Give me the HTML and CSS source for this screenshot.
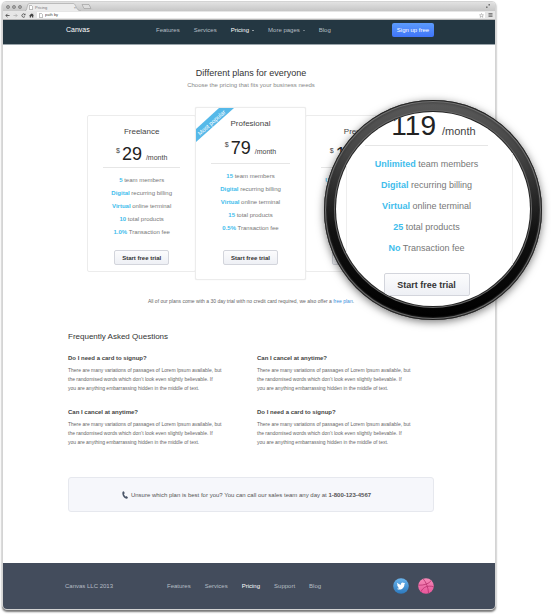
FILE: index.html
```html
<!DOCTYPE html>
<html lang="en">
<head>
<meta charset="utf-8">
<title>Canvas – Pricing</title>
<link rel="stylesheet" href="styles.css">
</head>
<body>
<div class="stage">
  <div class="window">
    <div class="tabstrip">
      <span class="lights"><i></i><i></i><i></i></span>
      <div class="tab">
        <svg class="tab-shape" viewBox="0 0 66 8" preserveAspectRatio="none" aria-hidden="true"><path d="M0 8C3 8 2 .5 5 .5H57C60 .5 60 8 66 8" fill="#ececec" stroke="#999" stroke-width=".6"/></svg>
        <svg class="doc" viewBox="0 0 4 5" aria-hidden="true"><path d="M.4.4h2l1.2 1.2v3H.4z" fill="#fff" stroke="#777" stroke-width=".5"/></svg>
        <span class="tab-title">Pricing</span>
        <span class="tab-close">×</span>
      </div>
      <svg class="newtab" viewBox="0 0 11 5" aria-hidden="true"><path d="M1 .5h7l2 4H3z" fill="#ddd" stroke="#999" stroke-width=".6"/></svg>
      <svg class="expand" viewBox="0 0 5 5" aria-hidden="true"><path d="M2.7 0H5v2.300zM0 2.700V5h2.300zM1 4l3-3" fill="#777" stroke="#777" stroke-width=".4"/></svg>
    </div>
    <div class="toolbar">
      <svg class="tool" viewBox="0 0 6 6" aria-hidden="true"><path d="M5.500 3H1M3 1 1 3l2 2" fill="none" stroke="#555" stroke-width="1.100"/></svg>
      <svg class="tool" viewBox="0 0 6 6" aria-hidden="true"><path d="M.5 3H5M3 1l2 2-2 2" fill="none" stroke="#b5b5b5" stroke-width="1"/></svg>
      <svg class="tool" viewBox="0 0 6 6" aria-hidden="true"><path d="M4.700 4.300A2 2 0 1 1 4.600 1.700" fill="none" stroke="#444" stroke-width="1"/><path d="M5.300.5v2.200H3.100z" fill="#444"/></svg>
      <svg class="tool" viewBox="0 0 6 6" aria-hidden="true"><path d="M3 .5 0 3.300h.9V5.500h1.500V3.900h1.200v1.600h1.500V3.300H6L5 2.400V.8h-.8v.8z" fill="#444"/></svg>
      <label class="address">
        <svg class="doc" viewBox="0 0 4 5" aria-hidden="true"><path d="M.4.4h2l1.200 1.200v3H.4z" fill="#fff" stroke="#777" stroke-width=".5"/></svg>
        <input type="text" value="path by" aria-label="Address">
        <svg class="star" viewBox="0 0 6 6" aria-hidden="true"><path d="m3 .6.7 1.600 1.700.1-1.300 1.100.5 1.800L3 4.300l-1.600.9.5-1.800L.6 2.300l1.700-.1z" fill="#fff" stroke="#777" stroke-width=".5"/></svg>
      </label>
      <svg class="menu" viewBox="0 0 5 5" aria-hidden="true"><path d="M0 .8h5M0 2.500h5M0 4.200h5" stroke="#555" stroke-width="1"/></svg>
    </div>

    <header class="topbar inset">
      <a class="brand" href="#">Canvas</a>
      <nav class="links">
        <a href="#">Features</a>
        <a href="#">Services</a>
        <a class="current drop" href="#">Pricing</a>
        <a class="drop" href="#">More pages</a>
        <a href="#">Blog</a>
      </nav>
      <button class="signup" type="button">Sign up free</button>
    </header>

    <main class="inset">
      <h1>Different plans for everyone</h1>
      <p class="lead">Choose the pricing that fits your business needs</p>

      <section class="plans">
        <article class="plan">
          <h2>Freelance</h2>
          <p class="price"><sup>$</sup><b>29</b><span>/month</span></p>
          <ul>
            <li><b>5</b> team members</li>
            <li><b>Digital</b> recurring billing</li>
            <li><b>Virtual</b> online terminal</li>
            <li><b>10</b> total products</li>
            <li><b>1.0%</b> Transaction fee</li>
          </ul>
          <button class="trial" type="button">Start free trial</button>
        </article>
        <article class="plan featured">
          <svg class="ribbon" viewBox="0 0 38 35" aria-hidden="true"><path d="M23 0h15L0 34V21z" fill="#56b9e9"/><text x="15" y="14" transform="rotate(-42 15 14)" dy="3" text-anchor="middle">Most popular</text></svg>
          <h2>Profesional</h2>
          <p class="price"><sup>$</sup><b>79</b><span>/month</span></p>
          <ul>
            <li><b>15</b> team members</li>
            <li><b>Digital</b> recurring billing</li>
            <li><b>Virtual</b> online terminal</li>
            <li><b>15</b> total products</li>
            <li><b>0.5%</b> Transaction fee</li>
          </ul>
          <button class="trial" type="button">Start free trial</button>
        </article>
        <article class="plan">
          <h2>Premium</h2>
          <p class="price"><sup>$</sup><b>119</b><span>/month</span></p>
          <ul>
            <li><b>Unlimited</b> team members</li>
            <li><b>Digital</b> recurring billing</li>
            <li><b>Virtual</b> online terminal</li>
            <li><b>25</b> total products</li>
            <li><b>No</b> Transaction fee</li>
          </ul>
          <button class="trial" type="button">Start free trial</button>
        </article>
      </section>
      <p class="note">All of our plans come with a 30 day trial with no credit card required, we also offer a <a href="#">free plan</a>.</p>

      <section class="faq">
        <h2>Frequently Asked Questions</h2>
        <div class="questions">
          <article>
            <h3>Do I need a card to signup?</h3>
            <p>There are many variations of passages of Lorem Ipsum available, but<br>the randomised words which don’t look even slightly believable. If<br>you are anything embarrassing hidden in the middle of text.</p>
          </article>
          <article>
            <h3>Can I cancel at anytime?</h3>
            <p>There are many variations of passages of Lorem Ipsum available, but<br>the randomised words which don’t look even slightly believable. If<br>you are anything embarrassing hidden in the middle of text.</p>
          </article>
          <article>
            <h3>Can I cancel at anytime?</h3>
            <p>There are many variations of passages of Lorem Ipsum available, but<br>the randomised words which don’t look even slightly believable. If<br>you are anything embarrassing hidden in the middle of text.</p>
          </article>
          <article>
            <h3>Do I need a card to signup?</h3>
            <p>There are many variations of passages of Lorem Ipsum available, but<br>the randomised words which don’t look even slightly believable. If<br>you are anything embarrassing hidden in the middle of text.</p>
          </article>
        </div>
      </section>

      <p class="callout">
        <svg viewBox="0 0 6 8" aria-hidden="true"><path d="M.6.7 1.900.2 2.800 2.300 1.900 3.100C2.200 4.300 2.900 5.100 3.800 5.700L4.700 5.100 6 6.700 5 7.700C2.500 8-.6 4.200.6.700z" fill="#4a5568"/></svg>
        <span>Unsure which plan is best for you? You can call our sales team any day at <b>1-800-123-4567</b></span>
      </p>
    </main>

    <footer class="inset">
      <span class="copy">Canvas LLC 2013</span>
      <nav class="links">
        <a href="#">Features</a>
        <a href="#">Services</a>
        <a class="current" href="#">Pricing</a>
        <a href="#">Support</a>
        <a href="#">Blog</a>
      </nav>
      <div class="social">
        <a href="#" aria-label="Twitter"><svg viewBox="0 0 16 16"><defs><linearGradient id="tw" x2="0" y2="1"><stop stop-color="#6bb5ee"/><stop offset="1" stop-color="#2c79bd"/></linearGradient></defs><circle cx="8" cy="8" r="7.800" fill="url(#tw)"/><path d="M12.300 5.300c-.3.150-.6.230-1 .28.350-.2.600-.55.750-.95-.35.200-.7.330-1.100.4a1.750 1.750 0 0 0-3 1.600C6.500 6.550 5.200 5.850 4.350 4.800c-.5.850-.2 1.850.55 2.350-.3 0-.55-.1-.8-.2 0 .85.600 1.550 1.400 1.700-.25.100-.5.100-.8.050.2.700.85 1.200 1.650 1.200-.8.650-1.700.850-2.600.75 3.700 2.200 7.700-.2 7.650-4.450.35-.25.650-.55.900-.9z" fill="#fff"/></svg></a>
        <a href="#" aria-label="Dribbble"><svg viewBox="0 0 16 16"><defs><linearGradient id="dr" x2="0" y2="1"><stop stop-color="#f58bb8"/><stop offset="1" stop-color="#e8559a"/></linearGradient></defs><circle cx="8" cy="8" r="7.800" fill="url(#dr)"/><g fill="none" stroke="#b8326f" stroke-width=".8"><path d="M5.200.9C8.300 4.500 10 9 10.600 15.200M.4 7.200C6 7.400 10.700 6 13.300 2.500M3 13.700C5.200 8.800 9.800 7.200 15.600 8.700"/></g></svg></a>
      </div>
    </footer>
  </div>

  <aside class="lens" aria-label="Magnified plan">
    <div class="glass">
      <div class="zoomed">
        <p class="price"><b>119</b><span>/month</span></p>
        <ul>
          <li><b>Unlimited</b> team members</li>
          <li><b>Digital</b> recurring billing</li>
          <li><b>Virtual</b> online terminal</li>
          <li><b>25</b> total products</li>
          <li><b>No</b> Transaction fee</li>
        </ul>
        <button class="trial" type="button">Start free trial</button>
      </div>
    </div>
  </aside>
</div>
</body>
</html>
```
FILE: styles.css
```css
* { box-sizing: border-box; }

body {
  margin: 0;
  background: #fff;
  color: #555;
  font: 6px/8px "Liberation Sans", Arial, sans-serif;
}

h1, h2, h3, p, ul { margin: 0; padding: 0; font-weight: normal; }
ul { list-style: none; }
a { color: inherit; text-decoration: none; }
svg { display: block; flex: none; }
button, input { font: inherit; }

.stage { position: relative; padding: 1px 55px 5px 2px; }

.window {
  border: 1px solid #d4d4d4;
  border-radius: 4px 4px 5px 5px;
  overflow: hidden;
  background: #fff;
  box-shadow: 0 2px 2px #777;
}

.inset { padding-left: 65px; padding-right: 61px; }

/* Browser chrome */
.tabstrip {
  display: flex;
  align-items: flex-end;
  height: 9px;
  padding: 0 5px 0 3px;
  background: linear-gradient(#e2e2e2, #c6c6c6);
}
.lights { display: flex; gap: 2px; align-self: center; margin-right: 3px; }
.lights i { width: 4px; height: 4px; border-radius: 50%; background: #aaa; border: 1px solid #888; }
.tab { position: relative; display: flex; align-items: center; gap: 2px; width: 56px; height: 8px; padding: 0 5px 0 4px; }
.tab-shape { position: absolute; inset: 0; width: 100%; height: 100%; }
.doc { position: relative; width: 4px; height: 5px; }
.tab-title, .tab-close { position: relative; font-size: 4px; line-height: 5px; color: #777; }
.tab-close { margin-left: auto; }
.newtab { width: 11px; height: 5px; margin-bottom: 2px; }
.expand { width: 4px; height: 4px; margin: 0 0 3px auto; }

.toolbar {
  display: flex;
  align-items: center;
  gap: 3px;
  height: 9px;
  padding: 0 2px;
  background: #e6e6e6;
  border-bottom: 1px solid #b5b5b5;
}
.tool { width: 5px; height: 5px; }
.address { display: flex; flex: 1; align-items: center; gap: 2px; height: 6px; padding: 0 1px 0 2px; background: #fff; }
.address input { flex: 1; min-width: 0; height: 6px; padding: 0; border: 0; background: none; font-size: 4px; color: #444; }
.star { width: 5px; height: 5px; }
.menu { width: 5px; height: 4px; }

/* Site header */
.topbar {
  display: flex;
  align-items: center;
  height: 25px;
  padding-left: 63px;
  padding-bottom: 4px;
  background: #243742;
  border-bottom: 1px solid #9aa5ab;
}
.brand { width: 90px; font-size: 7px; color: #fff; }
.links { display: flex; gap: 14px; color: #b5bec4; }
.links .current { color: #fff; }
.drop::after {
  content: "";
  display: inline-block;
  margin-left: 3px;
  vertical-align: 1px;
  border: 1px solid transparent;
  border-top-color: currentColor;
  border-bottom: 0;
}
.signup {
  width: 42px;
  height: 14px;
  margin-left: auto;
  padding: 0;
  border: 0;
  border-radius: 2px;
  background: linear-gradient(#5c9bfb, #3f74fa);
  color: #fff;
}

/* Pricing */
h1 { padding-top: 23px; text-align: center; font-size: 9px; line-height: 10px; color: #333; }
.lead { margin-top: 3px; text-align: center; line-height: 8px; color: #888; }

.plans {
  display: grid;
  grid-template-columns: 1fr 1fr 1fr;
  align-items: center;
  margin: 18px 19px 0;
  text-align: center;
}
.plan {
  position: relative;
  padding: 11px 15px 6px;
  border: 1px solid #ececec;
  border-radius: 2px;
  background: #fff;
}
.plan + .plan { margin-left: -1px; }
.featured { z-index: 1; padding-bottom: 14px; box-shadow: 0 0 1px #ddd; }
.plan h2 { font-size: 8px; line-height: 9px; color: #444; }
.featured h2 { margin-bottom: 2px; }
.price {
  display: flex;
  justify-content: center;
  align-items: baseline;
  height: 32px;
  padding-top: 8px;
  border-bottom: 1px solid #e6e6e6;
  font-size: 7px;
  color: #444;
}
.featured .price { height: 34px; }
.price b { margin: 0 4px 0 2px; font-size: 18px; line-height: 20px; font-weight: normal; color: #222; }
.price sup { align-self: flex-start; font-size: 7px; line-height: 14px; }
.plan ul { margin: 6px -8px 0; }
.plan li { line-height: 13px; color: #777; }
li b { color: #3fbdec; }
.trial {
  border: 1px solid #d3d5dc;
  border-radius: 2px;
  background: linear-gradient(#fcfcfd, #eef0f5);
  font-weight: bold;
  color: #333;
}
.plan .trial { width: 55px; height: 15px; margin-top: 11px; padding: 0; }
.plan.featured .trial { margin-top: 15px; }
.ribbon { position: absolute; top: 0; left: 0; width: 38px; height: 35px; }
.ribbon text { font-size: 6px; fill: #fff; }

.note { margin-top: 17px; text-align: center; font-size: 5px; color: #666; }
.note a { color: #3b8fdc; }

/* FAQ */
.faq { margin-top: 27px; }
.faq h2 { font-size: 8px; line-height: 10px; color: #333; }
.questions { display: grid; grid-template-columns: 1fr 1fr; gap: 15px 12px; margin-top: 12px; }
.questions h3 { font-size: 6px; font-weight: bold; line-height: 8px; color: #444; }
.questions p { margin-top: 4px; font-size: 5px; line-height: 9px; color: #666; white-space: nowrap; }

.callout {
  display: flex;
  justify-content: center;
  align-items: center;
  gap: 3px;
  height: 35px;
  margin: 30px 0 51px;
  padding-right: 9px;
  border: 1px solid #e6e8ee;
  border-radius: 3px;
  background: #f6f7fb;
}
.callout svg { width: 6px; height: 8px; }

/* Footer */
footer { display: flex; align-items: center; height: 46px; background: #434c5c; color: #b7bcc6; }
footer.inset { padding-left: 62px; }
.copy { width: 102px; }
.social { display: flex; gap: 9px; margin-left: auto; }
.social svg { width: 16px; height: 16px; }

/* Magnifier */
.lens {
  position: absolute;
  z-index: 2;
  top: 100px;
  right: 9px;
  padding: 12px 12px 14px;
  border-radius: 50%;
  background: linear-gradient(#5a5a5a, #444 25%, #111 60%, #000);
  box-shadow: inset 0 0 0 1px #222, inset 0 0 1px 2px #777, inset 0 0 2px 3px #2226, 0 2px 8px #0008;
}
.glass {
  width: 194px;
  height: 194px;
  overflow: hidden;
  border-radius: 50%;
  background: #fff;
  box-shadow: 0 0 0 1px #222, 0 0 0 2px #666;
}
.zoomed {
  width: 167px;
  height: 194px;
  margin-left: 10px;
  padding: 0 24px 0 18px;
  border: 1px solid #eee;
  border-width: 0 1px;
  text-align: center;
}
.zoomed .price { height: 34px; padding: 0 0 0 14px; font-size: 11px; }
.zoomed .price b { margin: 0 6px 0 0; font-size: 28px; line-height: 28px; }
.zoomed ul { margin: 8px -8px 0; }
.zoomed li { font-size: 9px; line-height: 21px; color: #777; }
.zoomed .trial { width: 86px; height: 23px; margin-top: 14px; padding: 0; font-size: 9px; }
```
